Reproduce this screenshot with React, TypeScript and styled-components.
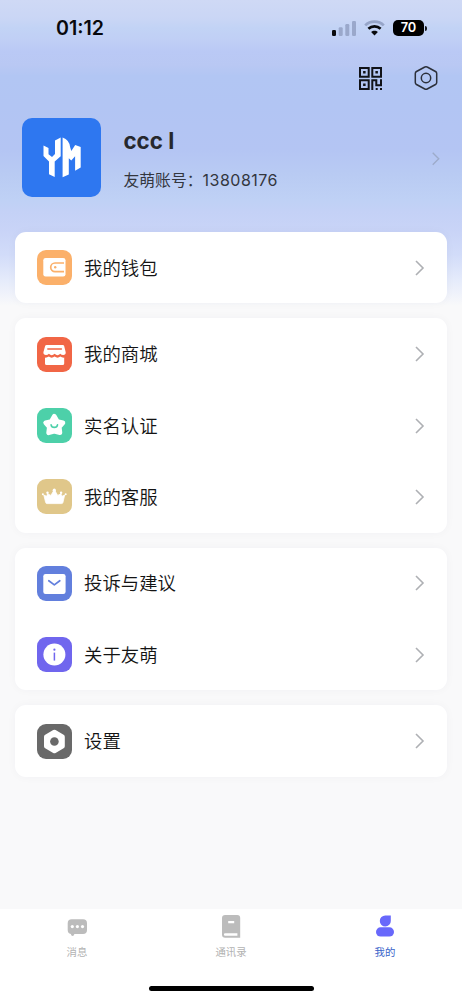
import React from 'react';
import styled, { createGlobalStyle } from 'styled-components';

const Global = createGlobalStyle`
  * { box-sizing: border-box; }
  body { margin: 0; background: #f9f9fa; font-family: Inter, "Noto Sans CJK SC", sans-serif; }
  svg { display: block; flex: none; }
`;

const Screen = styled.div`
  width: 462px;
  height: 1000px;
  display: flex;
  flex-direction: column;
  overflow: hidden;
  background: linear-gradient(180deg, #cfd9f5 0px, #cad6f5 18px, #c2d3f5 28px, #c0cff5 40px, #bac9f5 52px, #b9c8f3 65px, #b2c6f3 76px, #b2c5f3 105px, #b4c5f3 150px, #b9cbf3 175px, #bfd1f5 200px, #c4d1f6 212px, #c9d4f7 232px, #d2dcf9 255px, #e5ebfb 280px, #f9f9fa 306px);
`;

const StatusBar = styled.header`
  height: 56px;
  display: flex;
  align-items: center;
  justify-content: space-between;
  padding: 0 35px 0 56px;
`;

const Clock = styled.time`
  font-size: 19.6px;
  font-weight: 600;
  line-height: 24px;
  letter-spacing: 0;
  color: #08090c;
`;

const Indicators = styled.div`
  display: flex;
  align-items: center;
  gap: 8px;
`;

const Battery = styled.div`
  display: flex;
  align-items: center;
  gap: 1px;
  &::after {
    content: '';
    width: 2px;
    height: 5px;
    border-radius: 0 2px 2px 0;
    background: #15171c;
  }
`;

const BatteryLevel = styled.span`
  width: 31px;
  height: 16px;
  border-radius: 5px;
  background: #000;
  color: #fff;
  font-size: 12.8px;
  font-weight: 600;
  line-height: 16px;
  text-align: center;
`;

const Toolbar = styled.div`
  height: 44px;
  display: flex;
  align-items: center;
  justify-content: flex-end;
  gap: 32px;
  padding-right: 24px;
`;

const Profile = styled.section`
  height: 132px;
  display: flex;
  align-items: center;
  padding: 0 22px 18px 22px;
`;

const Avatar = styled.div`
  width: 79px;
  height: 79px;
  border-radius: 10px;
  background: #2e77f0;
  margin-right: 22.5px;
`;

const Identity = styled.div`
  flex: 1;
  display: flex;
  flex-direction: column;
  gap: 11.5px;
  padding-top: 5px;
`;

const Name = styled.h1`
  margin: 0;
  font-size: 22.3px;
  font-weight: 700;
  line-height: 30px;
  color: #26282d;
`;

const Account = styled.p`
  margin: 0;
  font-size: 15.8px;
  line-height: 24px;
  color: #33363e;
`;

const AccountNumber = styled.span`
  font-size: 16px;
  letter-spacing: 0.5px;
`;

const ProfileArrow = styled.div`
  padding-top: 4px;
`;

const Menu = styled.main`
  flex: 1;
  display: flex;
  flex-direction: column;
  gap: 15px;
  padding: 0 15px;
`;

const Card = styled.section`
  background: #fff;
  border-radius: 11px;
  box-shadow: 0 0 10px rgba(60, 60, 80, 0.035);
`;

const Row = styled.div`
  height: 71.42px;
  display: flex;
  align-items: center;
  padding: 0 22px;
`;

const RowLabel = styled.span`
  flex: 1;
  margin-left: 12px;
  font-size: 18.4px;
  font-weight: 350;
  line-height: 28px;
  color: #141414;
`;

const TabBar = styled.nav`
  height: 91px;
  display: flex;
  flex-direction: column;
  align-items: center;
  justify-content: space-between;
  background: #fff;
  padding-bottom: 9px;
`;

const Tabs = styled.div`
  width: 100%;
  display: grid;
  grid-template-columns: repeat(3, 1fr);
`;

const Tab = styled.div<{ $active?: boolean }>`
  display: flex;
  flex-direction: column;
  align-items: center;
  padding-top: 4px;
  gap: 5px;
  font-size: 10.4px;
  line-height: 16px;
  color: ${({ $active }) => ($active ? '#3763c9' : '#b2b2b2')};
`;

const HomeIndicator = styled.div`
  width: 165px;
  height: 5px;
  border-radius: 3px;
  background: #000;
`;

const Chevron = ({ size = 18, color = '#aeb0b4' }: { size?: number; color?: string }) => (
  <svg width={size * 0.6} height={size} viewBox="0 0 10.8 18" fill="none" stroke={color} strokeWidth="1.6">
    <path d="M2 2 9 9 2 16" />
  </svg>
);

const Signal = () => (
  <svg width="24" height="16" viewBox="0 0 24 16">
    <rect x="0" y="10" width="4" height="6" rx="1.2" fill="#0a0b0e" />
    <g fill="#9aa8cb">
      <rect x="6.7" y="7.3" width="4" height="8.7" rx="1.2" />
      <rect x="13.3" y="4" width="4" height="12" rx="1.2" />
      <rect x="20" y="1" width="4" height="15" rx="1.2" />
    </g>
  </svg>
);

const Wifi = () => (
  <svg width="21" height="16" viewBox="0 0 21 16" fill="none">
    <path d="M1.2 5.4C6.3.4 14.7.4 19.8 5.4" stroke="#96a5c8" strokeWidth="2.7" />
    <path d="M4.4 8.7c3.5-3.2 8.7-3.2 12.2 0" stroke="#08090c" strokeWidth="2.7" />
    <path d="M7.1 12.1c1.9-1.8 4.9-1.8 6.8 0L10.5 15.5Z" fill="#08090c" />
  </svg>
);

const QrCode = () => (
  <svg width="23" height="23" viewBox="0 0 23 23">
    <g fill="none" stroke="#111318" strokeWidth="2">
      <path d="M1 1h8.7v8.7H1zM13.3 1H22v8.7h-8.7zM1 13.3h8.7V22H1z" />
      <path d="M13.3 23v-9.7h4v5H22v-6" />
    </g>
    <path d="M4.1 4.1h2.5v2.5H4.1zM16.4 4.1h2.5v2.5h-2.5zM4.1 16.4h2.5v2.5H4.1zM16.7 21h2v2h-2zM21 21h2v2h-2z" fill="#111318" />
  </svg>
);

const Hexagon = () => (
  <svg width="24" height="26" viewBox="0 0 24 26" fill="none" stroke="#2c303a" strokeWidth="1.5">
    <path d="M10.8 2q1.2-.7 2.4 0l8.3 4.500q1.200.7 1.200 2v9q0 1.300-1.200 2l-8.300 4.500q-1.200.7-2.400 0l-8.300-4.500q-1.200-.7-1.200-2v-9q0-1.300 1.200-2z" />
    <circle cx="12" cy="13" r="4.700" />
  </svg>
);

const Logo = () => (
  <svg width="79" height="79" viewBox="0 0 79 79" fill="#fff">
    <path d="M21.500 27.500 26.500 30v6.200l3.500 2.800 3-2.900V22.500L38.700 19.500v18.700l-6 5.300v15.500L27 56.200V43.600l-5.500-5.500z" />
    <path d="M40.600 19.500q6.800 2.400 7.500 9.600l1.200 3.800 3.900-6L58.700 29v20.500l-5.600 3.200V38.200l-3.800 4.300-2.500-2.200V56.400l-6.200 2.800z" />
  </svg>
);

const Tile = ({ color, children }: { color: string; children: React.ReactNode }) => (
  <svg width="35" height="35" viewBox="0 0 35 35">
    <rect width="35" height="35" rx="9" fill={color} />
    {children}
  </svg>
);

const WalletIcon = () => (
  <Tile color="#fbb06a">
    <rect x="6.3" y="8" width="22.2" height="18.6" rx="2.3" fill="#fff" />
    <path d="M27 13h-9a4.300 4.300 0 0 0 0 8.600h9" fill="none" stroke="#fbb06a" strokeWidth="1.7" />
    <circle cx="18.2" cy="17.3" r="1.2" fill="#fbb06a" />
  </Tile>
);

const ShopIcon = () => (
  <Tile color="#f16646">
    <path d="M9.600 8h16.200q1 0 1.300.8l1.600 6.500q.2 2.700-2.500 2.700-1.800 0-2.900-1.300-2.700 2.900-5.700 0-2.900 2.900-5.700 0-1.100 1.300-2.900 1.300-2.700 0-2.600-2.700l1.800-6.500q.4-.8 1.400-.8z" fill="#fff" />
    <path d="M8 20.600q2 .2 3.800-1 2.900 2.300 5.800 0 2.900 2.300 5.700 0 1.800 1.200 3.900 1v6q0 1.500-1.600 1.500h-16Q8 28.100 8 26.600z" fill="#fff" />
    <path d="M10.800 12h13.600" stroke="#f16646" strokeWidth="1.400" strokeLinecap="round" />
  </Tile>
);

const StarIcon = () => (
  <Tile color="#4dd0a9">
    <path d="M17.300 8.200 20.300 13.400 26 14.700 22.300 19.100 23 24.800 17.300 23.300 11.600 24.800 12.300 19.100 8.600 14.700 14.300 13.400z" fill="#fff" stroke="#fff" strokeWidth="4.600" strokeLinejoin="round" />
    <path d="M14.100 16.800q.4 2.600 3.200 2.600t3.200-2.600" fill="none" stroke="#4dd0a9" strokeWidth="1.600" strokeLinecap="round" />
  </Tile>
);

const CrownIcon = () => (
  <Tile color="#e0c78a">
    <path d="M6.800 16 9.600 17.300 10.600 14.800 13.900 16.400 16.500 12h1.600l2.600 4.400 3.200-1.600 1 2.500 2.800-1.300-1.800 7.600q-.3 1-1.200 1H9.900q-.9 0-1.200-1z" fill="#fff" stroke="#fff" strokeWidth=".8" strokeLinejoin="round" />
    <g fill="#fff">
      <circle cx="17.300" cy="11.200" r="1.600" />
      <circle cx="10.500" cy="13.800" r="1.200" />
      <circle cx="24.100" cy="13.800" r="1.200" />
      <circle cx="5.900" cy="15.300" r="1" />
      <circle cx="28.700" cy="15.300" r="1" />
    </g>
  </Tile>
);

const MailIcon = () => (
  <Tile color="#627fdd">
    <rect x="6.300" y="8" width="22.300" height="20" rx="2.300" fill="#fff" />
    <path d="m11.800 14.700 5.500 4.200 5.500-4.200" fill="none" stroke="#627fdd" strokeWidth="1.700" strokeLinecap="round" strokeLinejoin="round" />
  </Tile>
);

const InfoIcon = () => (
  <Tile color="#7066ee">
    <circle cx="17.400" cy="17.500" r="11" fill="#fff" />
    <circle cx="17.400" cy="12.700" r="1.100" fill="#7066ee" />
    <path d="M17.400 15.600v8" stroke="#7066ee" strokeWidth="1.500" />
  </Tile>
);

const SettingsIcon = () => (
  <Tile color="#696969">
    <path d="M16.200 6.100q1.200-.7 2.400 0l8 4.600q1.200.7 1.200 2v9.500q0 1.300-1.200 2l-8 4.800q-1.200.7-2.400 0l-8-4.800q-1.200-.7-1.200-2v-9.500q0-1.300 1.200-2z" fill="#fff" />
    <circle cx="17.400" cy="17.500" r="4.300" fill="#696969" />
  </Tile>
);

const MessageTabIcon = () => (
  <svg width="26" height="27" viewBox="0 0 26 27">
    <path d="M7.700 6.200h11.300q4 0 4 4v6.800q0 4-4 4h-8.600q-.4 2-1.900 2-1.200-.2-1.700-2-3.100-.5-3.100-4v-6.800q0-4 4-4z" fill="#bcbcbc" />
    <g fill="#fff">
      <circle cx="8.300" cy="13.600" r="1.600" />
      <circle cx="13.400" cy="13.600" r="1.600" />
      <circle cx="18.500" cy="13.600" r="1.600" />
    </g>
  </svg>
);

const BookTabIcon = () => (
  <svg width="26" height="27" viewBox="0 0 26 27">
    <path d="M7.200 2h12q3 0 3 3v19.800h-15q-3.200 0-3.200-3.300V5q0-3 3.200-3z" fill="#bcbcbc" />
    <path d="M7.200 20.200h12.200v2.500H7.200q-1.300 0-1.300-1.200t1.300-1.300zM10.200 8h6v2.200h-6z" fill="#fff" />
  </svg>
);

const ProfileTabIcon = () => (
  <svg width="26" height="27" viewBox="0 0 26 27" fill="#6868fb">
    <path d="M13.300 2.500h5.500v5.400a5.500 5.500 0 1 1-5.500-5.400z" />
    <rect x="4" y="14.300" width="18" height="9.200" rx="4.600" />
  </svg>
);

const groups = [
  [{ label: '我的钱包', Icon: WalletIcon }],
  [
    { label: '我的商城', Icon: ShopIcon },
    { label: '实名认证', Icon: StarIcon },
    { label: '我的客服', Icon: CrownIcon },
  ],
  [
    { label: '投诉与建议', Icon: MailIcon },
    { label: '关于友萌', Icon: InfoIcon },
  ],
  [{ label: '设置', Icon: SettingsIcon }],
];

export default function App() {
  return (
    <Screen>
      <Global />
      <StatusBar>
        <Clock>01:12</Clock>
        <Indicators>
          <Signal />
          <Wifi />
          <Battery><BatteryLevel>70</BatteryLevel></Battery>
        </Indicators>
      </StatusBar>
      <Toolbar>
        <QrCode />
        <Hexagon />
      </Toolbar>
      <Profile>
        <Avatar><Logo /></Avatar>
        <Identity>
          <Name>ccc l</Name>
          <Account>友萌账号：<AccountNumber>13808176</AccountNumber></Account>
        </Identity>
        <ProfileArrow><Chevron size={15.5} color="#9dabca" /></ProfileArrow>
      </Profile>
      <Menu>
        {groups.map((rows) => (
          <Card key={rows[0].label}>
            {rows.map(({ label, Icon }) => (
              <Row key={label}>
                <Icon />
                <RowLabel>{label}</RowLabel>
                <Chevron />
              </Row>
            ))}
          </Card>
        ))}
      </Menu>
      <TabBar>
        <Tabs>
          <Tab><MessageTabIcon />消息</Tab>
          <Tab><BookTabIcon />通讯录</Tab>
          <Tab $active><ProfileTabIcon />我的</Tab>
        </Tabs>
        <HomeIndicator />
      </TabBar>
    </Screen>
  );
}
